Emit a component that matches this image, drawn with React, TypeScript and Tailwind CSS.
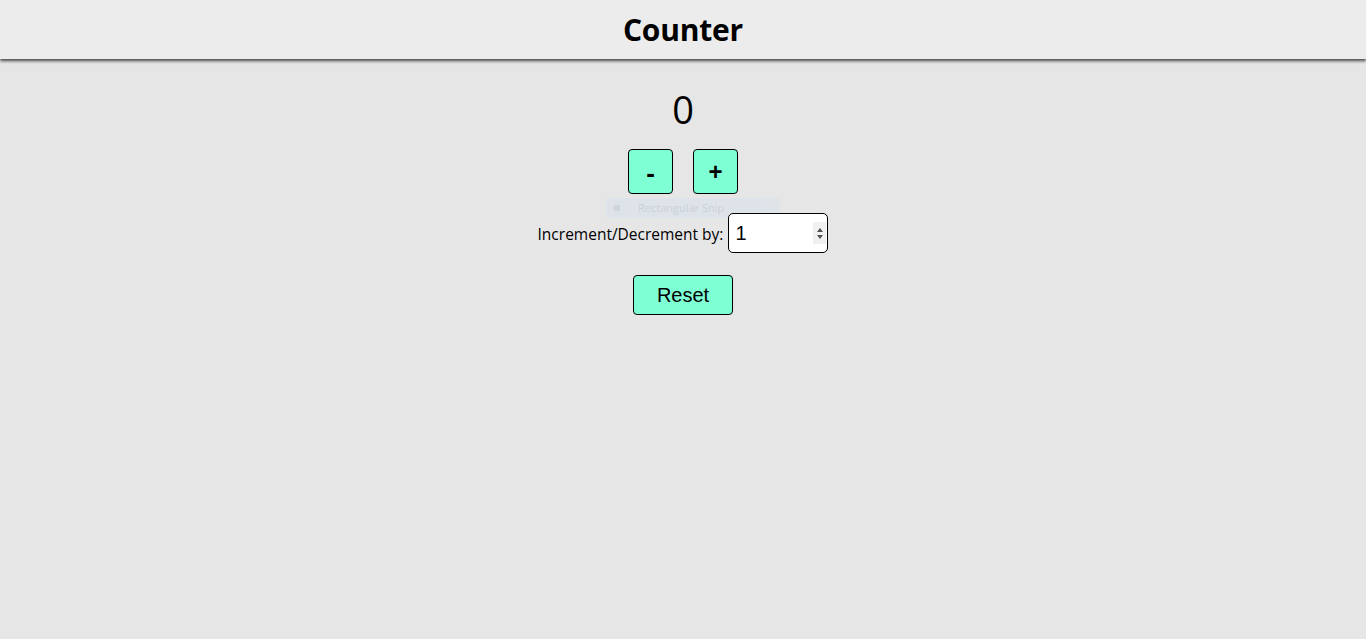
import { useState } from 'react';

export default function App() {
  const [count, setCount] = useState(0);
  const [step, setStep] = useState(1);

  return (
    <div className="min-h-[639px] bg-[#e6e6e6] font-['Open_Sans','Noto_Sans',sans-serif] text-black">
      {/* Header */}
      <header className="h-[59px] bg-[#ececec] flex items-center justify-center shadow-[0_2px_3px_rgba(0,0,0,0.7)]">
        <h1 className="text-[30px] font-bold leading-none tracking-[-0.2px]">Counter</h1>
      </header>

      <main className="flex flex-col items-center">
        <div className="mt-[27px] text-[38px] leading-[46px]">{count}</div>

        <div className="mt-[17px] flex gap-5">
          <button
            onClick={() => setCount(count - step)}
            className="w-[45px] h-[45px] bg-[#7fffd4] border border-black rounded text-[26px] font-bold font-['Liberation_Sans',sans-serif] pt-[3px]"
          >
            -
          </button>
          <button
            onClick={() => setCount(count + step)}
            className="w-[45px] h-[45px] bg-[#7fffd4] border border-black rounded text-[24px] font-semibold font-['Liberation_Sans',sans-serif]"
          >
            +
          </button>
        </div>

        {/* faint snipping tool ghost */}
        <div className="relative w-full h-0">
          <div className="absolute left-[606px] top-[4px] w-[174px] h-[20px] bg-[#dde3ea] opacity-80 flex items-center text-[11px] text-[#c4ccd6]">
            <span className="ml-[8px] w-[6px] h-[6px] bg-[#c9d2dc]" />
            <span className="ml-[18px]">Rectangular Snip</span>
          </div>
        </div>

        <div className="mt-[19px] flex items-center gap-[5px] pt-[2px]">
          <label className="text-[15.5px] pt-[2px]">Increment/Decrement by:</label>
          <div className="relative -mt-[2px]">
            <input
              type="number"
              value={step}
              onChange={(e) => setStep(Number(e.target.value))}
              className="w-[100px] h-[40px] bg-white border border-black rounded-[5px] pl-[6px] pr-[20px] text-[20px] font-['Liberation_Sans',sans-serif] [appearance:textfield] [&::-webkit-inner-spin-button]:appearance-none"
            />
            {/* spinner */}
            <div className="absolute right-[2px] top-[9px] w-[13px] h-[22px] bg-[#f0f0f0] flex flex-col items-center justify-center gap-[3px] pointer-events-none">
              <span className="w-0 h-0 border-l-[3.5px] border-r-[3.5px] border-b-[4px] border-l-transparent border-r-transparent border-b-[#505050]" />
              <span className="w-0 h-0 border-l-[3.5px] border-r-[3.5px] border-t-[4px] border-l-transparent border-r-transparent border-t-[#505050]" />
            </div>
          </div>
        </div>

        <button
          onClick={() => setCount(0)}
          className="mt-[22px] w-[100px] h-[40px] bg-[#7fffd4] border border-black rounded-[4px] text-[20px] font-['Liberation_Sans',sans-serif]"
        >
          Reset
        </button>
      </main>
    </div>
  );
}
